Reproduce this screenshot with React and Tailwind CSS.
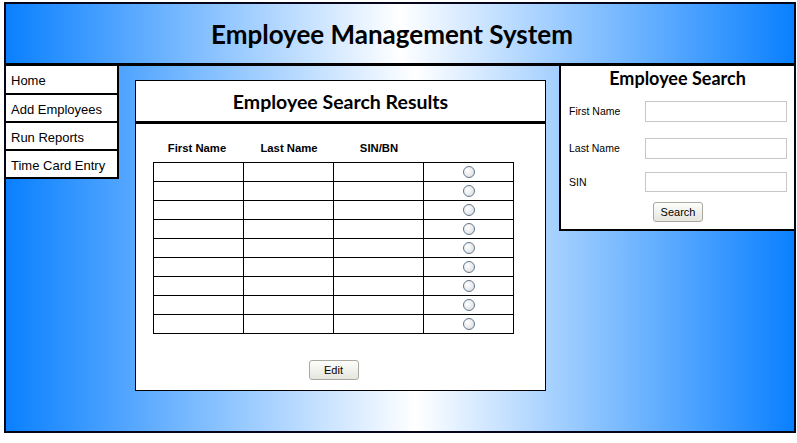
import React from "react";

const arial = "font-['Liberation_Sans',Arial,sans-serif]";
const title = "font-['Lato',sans-serif] font-bold";

function Radio() {
  return (
    <span className="block w-[12px] h-[12px] rounded-full border border-[#62778c] bg-[radial-gradient(circle_at_35%_35%,#ffffff,#d6d9dc)]" />
  );
}

function Btn({ children, className = "" }) {
  return (
    <button
      className={`${arial} text-[11px] text-black rounded-[3px] border border-[#a9a9a0] bg-gradient-to-b from-[#fdfdfb] to-[#e6e6de] flex items-center justify-center ${className}`}
    >
      {children}
    </button>
  );
}

export default function App() {
  const rows = Array.from({ length: 9 });
  const nav = ["Home", "Add Employees", "Run Reports", "Time Card Entry"];
  return (
    <div className="w-[797px] h-[443px] bg-white overflow-hidden pt-[2px] pl-[4px]">
      <div className="w-[792px] h-[431px] border-2 border-[#05051a] flex flex-col">
        <div className="h-[62px] shrink-0 border-b-[3px] border-black bg-[linear-gradient(to_right,#0a80ff,#ffffff_50%,#0a80ff)] flex items-center justify-center pr-[16px] pt-[1px]">
          <h1 className={`${title} text-[26px] text-black leading-none`}>Employee Management System</h1>
        </div>
        <div className="flex-1 flex items-start bg-[linear-gradient(to_right,#0a80ff,#ffffff_52%,#0a80ff)]">
          <nav className="w-[113px] shrink-0 border-r-2 border-black bg-white">
            {nav.map((n, i) => (
              <div
                key={n}
                className={`${arial} text-[13px] text-black ${i === 0 ? "h-[29px]" : "h-[28px]"} border-b-2 border-black flex items-center pl-[5px] pt-[3px]`}
              >
                {n}
              </div>
            ))}
          </nav>

          <section className="ml-[16px] mt-[14px] w-[411px] h-[311px] shrink-0 border border-black bg-white flex flex-col">
            <div className="h-[43px] border-b-[3px] border-black flex items-center justify-center pt-[1px]">
              <h2 className={`${title} text-[19.5px] text-black leading-none`}>Employee Search Results</h2>
            </div>
            <div className="pl-[17px] pt-[17px]">
              <div className={`${arial} font-bold text-[11.3px] text-black w-[361px] pl-[1px] grid grid-cols-[90px_90px_90px_90px] h-[14px] leading-[14px]`}>
                <div className="text-center pr-[4px]">First Name</div>
                <div className="text-center">Last Name</div>
                <div className="text-center">SIN/BN</div>
                <div />
              </div>
              <div className="mt-[7px] w-[361px] border-l border-t border-black">
                {rows.map((_, r) => (
                  <div key={r} className="grid grid-cols-[90px_90px_90px_90px] h-[19px]">
                    <div className="border-r border-b border-black" />
                    <div className="border-r border-b border-black" />
                    <div className="border-r border-b border-black" />
                    <div className="border-r border-b border-black flex items-center justify-center">
                      <Radio />
                    </div>
                  </div>
                ))}
              </div>
              <div className="w-[361px] flex justify-center mt-[26px]">
                <Btn className="w-[50px] h-[20px]">Edit</Btn>
              </div>
            </div>
          </section>

          <aside className="ml-[13px] flex-1 h-[165px] border-l-2 border-b-2 border-black bg-white flex flex-col">
            <h2 className={`${title} text-[18px] text-black leading-[22px] text-center pt-[1px]`}>Employee Search</h2>
            <div className={`${arial} text-[10.5px] text-black pl-[8px]`}>
              <div className="flex items-center mt-[12px]">
                <span className="w-[76px] pt-[1px]">First Name</span>
                <span className="w-[142px] h-[21px] border border-[#c6c6c6] bg-white" />
              </div>
              <div className="flex items-center mt-[16px]">
                <span className="w-[76px] pt-[1px]">Last Name</span>
                <span className="w-[142px] h-[21px] border border-[#c6c6c6] bg-white" />
              </div>
              <div className="flex items-center mt-[13px]">
                <span className="w-[76px] pt-[1px]">SIN</span>
                <span className="w-[142px] h-[20px] border border-[#c6c6c6] bg-white" />
              </div>
            </div>
            <div className="flex justify-center mt-[10px] pl-[1px]">
              <Btn className="w-[50px] h-[20px]">Search</Btn>
            </div>
          </aside>
        </div>
      </div>
    </div>
  );
}
